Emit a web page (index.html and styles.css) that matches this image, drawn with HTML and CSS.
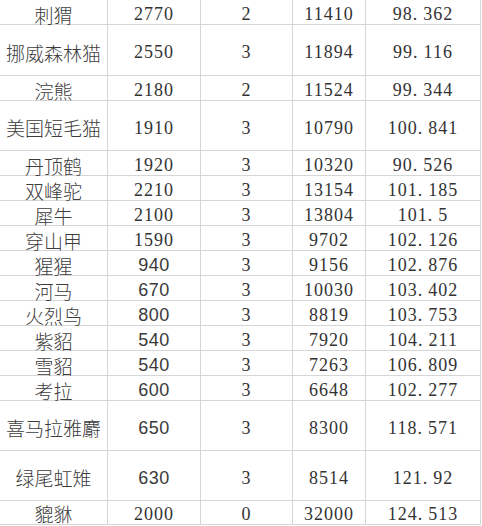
FILE: index.html
```html
<!DOCTYPE html>
<html lang="zh-CN">
<head>
<meta charset="utf-8">
<title>动物数据表</title>
<link rel="stylesheet" href="styles.css">
</head>
<body>
<div class="sheet">
  <div class="c zh">刺猬</div><div class="c num">2770</div><div class="c num">2</div><div class="c num">11410</div><div class="c num">98<span class="pt">.</span>362</div>
  <div class="c zh">挪威森林猫</div><div class="c num">2550</div><div class="c num">3</div><div class="c num">11894</div><div class="c num">99<span class="pt">.</span>116</div>
  <div class="c zh">浣熊</div><div class="c num">2180</div><div class="c num">2</div><div class="c num">11524</div><div class="c num">99<span class="pt">.</span>344</div>
  <div class="c zh">美国短毛猫</div><div class="c num">1910</div><div class="c num">3</div><div class="c num">10790</div><div class="c num">100<span class="pt">.</span>841</div>
  <div class="c zh">丹顶鹤</div><div class="c num">1920</div><div class="c num">3</div><div class="c num">10320</div><div class="c num">90<span class="pt">.</span>526</div>
  <div class="c zh">双峰驼</div><div class="c num">2210</div><div class="c num">3</div><div class="c num">13154</div><div class="c num">101<span class="pt">.</span>185</div>
  <div class="c zh">犀牛</div><div class="c num">2100</div><div class="c num">3</div><div class="c num">13804</div><div class="c num">101<span class="pt">.</span>5</div>
  <div class="c zh">穿山甲</div><div class="c num">1590</div><div class="c num">3</div><div class="c num">9702</div><div class="c num">102<span class="pt">.</span>126</div>
  <div class="c zh">猩猩</div><div class="c sans">940</div><div class="c num">3</div><div class="c num">9156</div><div class="c num">102<span class="pt">.</span>876</div>
  <div class="c zh">河马</div><div class="c sans">670</div><div class="c num">3</div><div class="c num">10030</div><div class="c num">103<span class="pt">.</span>402</div>
  <div class="c zh">火烈鸟</div><div class="c sans">800</div><div class="c num">3</div><div class="c num">8819</div><div class="c num">103<span class="pt">.</span>753</div>
  <div class="c zh">紫貂</div><div class="c sans">540</div><div class="c num">3</div><div class="c num">7920</div><div class="c num">104<span class="pt">.</span>211</div>
  <div class="c zh">雪貂</div><div class="c sans">540</div><div class="c num">3</div><div class="c num">7263</div><div class="c num">106<span class="pt">.</span>809</div>
  <div class="c zh">考拉</div><div class="c sans">600</div><div class="c num">3</div><div class="c num">6648</div><div class="c num">102<span class="pt">.</span>277</div>
  <div class="c zh">喜马拉雅麝</div><div class="c sans">650</div><div class="c num">3</div><div class="c num">8300</div><div class="c num">118<span class="pt">.</span>571</div>
  <div class="c zh">绿尾虹雉</div><div class="c sans">630</div><div class="c num">3</div><div class="c num">8514</div><div class="c num">121<span class="pt">.</span>92</div>
  <div class="c zh last">貔貅</div><div class="c num last">2000</div><div class="c num last">0</div><div class="c num last">32000</div><div class="c num last">124<span class="pt">.</span>513</div>
</div>
</body>
</html>
```

FILE: styles.css
```css
html, body {
  margin: 0;
  padding: 0;
  background: #ffffff;
}

.sheet {
  display: grid;
  grid-template-columns: 108px 93px 92px 73px 115px;
  grid-template-rows: 25px 51px 25px 50px repeat(10, 25px) 50px 50px 24px;
  width: 481px;
}

.c {
  box-sizing: border-box;
  border-right: 1px solid #d6d6d6;
  border-bottom: 1px solid #d6d6d6;
  display: flex;
  align-items: center;
  justify-content: center;
  padding-top: 4px;
  line-height: 1;
  color: #333333;
  white-space: nowrap;
}

.c.last {
  padding-top: 2px;
}

.zh {
  font-family: "Noto Sans CJK SC", "Noto Sans", sans-serif;
  font-size: 19px;
  font-weight: 300;
  color: #3c3c3c;
}

.num {
  font-family: "Liberation Serif", serif;
  font-size: 18px;
  letter-spacing: 1px;
}

.sans {
  font-family: "Liberation Sans", sans-serif;
  font-size: 18px;
  letter-spacing: 0.5px;
  color: #3a3a3a;
}

.pt {
  margin-right: 5px;
}
```
